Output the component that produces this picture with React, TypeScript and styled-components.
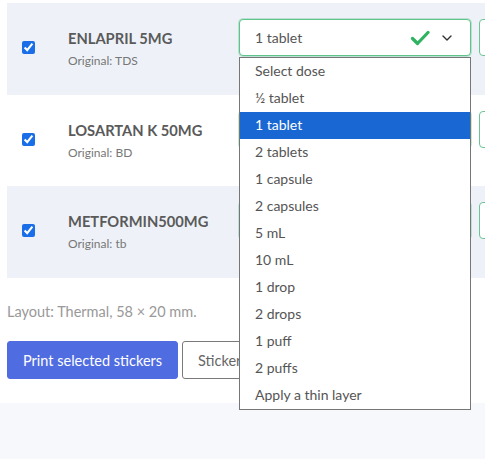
import React from 'react';
import styled, { createGlobalStyle } from 'styled-components';

const GlobalStyle = createGlobalStyle`
  body {
    margin: 0;
    padding: 0;
    background: #f7f8fc;
    font-family: Lato, "Open Sans", sans-serif;
  }
`;

const Page = styled.div`
  position: relative;
  min-height: 100vh;
  overflow: hidden;
`;

const Card = styled.div`
  width: 100%;
  box-sizing: border-box;
  overflow: hidden;
  background: #ffffff;
  padding: 3px 0 24px 7px;
`;

const Row = styled.div<{ $shaded?: boolean }>`
  display: grid;
  grid-template-columns: 13px 204px 232px 120px;
  align-items: start;
  width: 640px;
  height: ${(p) => (p.$shaded ? 92 : 91)}px;
  box-sizing: border-box;
  padding: 16px 0 0 15px;
  background: ${(p) => (p.$shaded ? '#eef2f8' : '#ffffff')};
`;

const Check = styled.input`
  margin: 22px 0 0;
  width: 13px;
  height: 13px;
  accent-color: #1a6fe8;
`;

const Drug = styled.div`
  padding: 10px 0 0 33px;
`;

const DrugName = styled.div`
  font-size: 14.7px;
  font-weight: 700;
  color: #5a5a5a;
  line-height: 19px;
`;

const Original = styled.div`
  margin-top: 5px;
  font-size: 12px;
  color: #777;
  line-height: 15px;
`;

const SelectBox = styled.div<{ $valid?: boolean }>`
  box-sizing: border-box;
  height: 37px;
  display: flex;
  align-items: center;
  padding: 0 18px 0 15px;
  border: 1px solid ${(p) => (p.$valid ? '#5fc38b' : '#ced4da')};
  border-radius: 4px;
  box-shadow: ${(p) => (p.$valid ? '0 0 0 1px rgba(95,195,139,0.35)' : 'none')};
  background: #fff;
  font-size: 14px;
  color: #555;
`;

const SelectText = styled.span`
  flex: 1;
`;

const SideBox = styled.div`
  box-sizing: border-box;
  margin-left: 8px;
  height: 37px;
  border: 1px solid #6cc495;
  border-radius: 4px;
  background: #fff;
`;

const Dropdown = styled.ul`
  position: absolute;
  left: 239px;
  top: 57px;
  width: 232px;
  box-sizing: border-box;
  margin: 0;
  padding: 0;
  list-style: none;
  background: #fff;
  border: 1px solid #767676;
  z-index: 5;
`;

const Option = styled.li<{ $active?: boolean }>`
  height: 27px;
  line-height: 26px;
  padding-left: 15px;
  font-size: 14px;
  color: ${(p) => (p.$active ? '#fff' : '#555')};
  background: ${(p) => (p.$active ? '#1967d2' : 'transparent')};
`;

const Note = styled.div`
  margin-top: 24px;
  font-size: 14.5px;
  line-height: 20px;
  color: #999;
`;

const Actions = styled.div`
  display: flex;
  gap: 4px;
  margin-top: 19px;
`;

const Button = styled.button<{ $primary?: boolean }>`
  height: 38px;
  padding: 0 15px;
  border-radius: 3px;
  font-family: inherit;
  font-size: 14.5px;
  white-space: nowrap;
  border: 1px solid ${(p) => (p.$primary ? '#506ce1' : '#7a7a7a')};
  background: ${(p) => (p.$primary ? '#506ce1' : '#fff')};
  color: ${(p) => (p.$primary ? '#fff' : '#666')};
`;

const drugs = [
  { name: 'ENLAPRIL 5MG', original: 'TDS' },
  { name: 'LOSARTAN K 50MG', original: 'BD' },
  { name: 'METFORMIN500MG', original: 'tb' },
];

const doses = [
  'Select dose',
  '½ tablet',
  '1 tablet',
  '2 tablets',
  '1 capsule',
  '2 capsules',
  '5 mL',
  '10 mL',
  '1 drop',
  '2 drops',
  '1 puff',
  '2 puffs',
  'Apply a thin layer',
];

const App: React.FC = () => {
  return (
    <Page>
      <GlobalStyle />
      <Card>
        {drugs.map((d, i) => (
          <Row key={d.name} $shaded={i !== 1}>
            <Check type="checkbox" defaultChecked />
            <Drug>
              <DrugName>{d.name}</DrugName>
              <Original>Original: {d.original}</Original>
            </Drug>
            <SelectBox $valid>
              <SelectText>1 tablet</SelectText>
              <svg width="20" height="16" viewBox="0 0 20 16" style={{ marginRight: 12 }}>
                <path d="M2.5 8.5 L7.5 13.5 L18 2.5" fill="none" stroke="#2eb360" strokeWidth="3.2" strokeLinecap="round" strokeLinejoin="round" />
              </svg>
              <svg width="10" height="6" viewBox="0 0 10 6">
                <path d="M1 1 L5 5 L9 1" fill="none" stroke="#333" strokeWidth="1.4" strokeLinecap="round" strokeLinejoin="round" />
              </svg>
            </SelectBox>
            <SideBox />
          </Row>
        ))}
        <Note>Layout: Thermal, 58 × 20 mm.</Note>
        <Actions>
          <Button $primary>Print selected stickers</Button>
          <Button>Sticker preview</Button>
        </Actions>
      </Card>
      <Dropdown>
        {doses.map((o) => (
          <Option key={o} $active={o === '1 tablet'}>
            {o}
          </Option>
        ))}
      </Dropdown>
    </Page>
  );
};

export default App;
